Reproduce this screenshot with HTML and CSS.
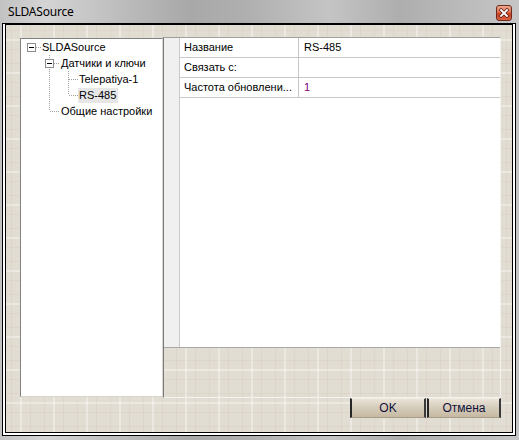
FILE: index.html
```html
<!DOCTYPE html>
<html>
<head>
  <title>SLDASource</title>
  <link rel="stylesheet" href="styles.css">
</head>
<body>
  <div class="window">
    <div class="titlebar">
      <span class="title">SLDASource</span>
      <span class="close">
        <svg width="16" height="16" viewBox="0 0 16 16">
          <path d="M5 5 L11 11 M11 5 L5 11" stroke="#5a1a10" stroke-width="3.2" stroke-linecap="square"/>
          <path d="M5 5 L11 11 M11 5 L5 11" stroke="#fff" stroke-width="1.8" stroke-linecap="square"/>
        </svg>
      </span>
    </div>

    <div class="frame">
      <div class="client">
        <div class="main">
          <div class="tree">
            <div class="row lvl0"><span class="exp"></span><span class="dash"></span><span class="label">SLDASource</span></div>
            <div class="group group-root">
              <div class="row lvl1"><span class="exp"></span><span class="dash"></span><span class="label">Датчики и ключи</span></div>
              <div class="group group-sensors">
                <div class="row lvl2"><span class="dash"></span><span class="label">Telepatiya-1</span></div>
                <div class="row lvl2"><span class="dash"></span><span class="label selected">RS-485</span></div>
              </div>
              <div class="row lvl1-leaf"><span class="dash"></span><span class="label">Общие настройки</span></div>
            </div>
          </div>

          <div class="props">
            <div class="grid">
              <div class="gutter"></div>
              <div class="rows">
                <div class="prow"><div class="pname">Название</div><div class="pval">RS-485</div></div>
                <div class="prow"><div class="pname">Связать с:</div><div class="pval"></div></div>
                <div class="prow"><div class="pname">Частота обновлени...</div><div class="pval num">1</div></div>
              </div>
            </div>
            <div class="help"></div>
          </div>
        </div>

        <div class="buttons">
          <button class="btn btn-ok">OK</button>
          <button class="btn btn-cancel">Отмена</button>
        </div>
      </div>
    </div>
  </div>
</body>
</html>
```

FILE: styles.css
```css
body {
  margin: 0;
  font-family: "Liberation Sans", Arial, sans-serif;
  font-size: 11px;
  color: #000;
}

.window {
  width: 519px;
  height: 440px;
  display: flex;
  flex-direction: column;
  background: linear-gradient(to right, #c2c2c2 0, #d4d4d4 45px, #c0c0c0 110px, #a8a8a8 190px, #b0b0b0 250px, #c4c4c4 330px, #aeaeae 400px, #bababa 460px, #c6c6c6 519px);
}

.titlebar {
  height: 23px;
  display: flex;
  align-items: flex-start;
  justify-content: space-between;
}

.title {
  font-family: "Noto Sans", "Open Sans", sans-serif;
  font-size: 12px;
  margin: 3px 0 0 8px;
  letter-spacing: -0.2px;
}

.close {
  width: 16px;
  height: 16px;
  margin: 5px 7px 0 0;
  box-sizing: border-box;
  border: 1px solid #6b2a1e;
  border-radius: 3px;
  background: linear-gradient(to bottom, #f0a890 0, #e07050 45%, #c8401f 55%, #dc6040 100%);
  display: flex;
}

.close svg {
  margin: -1px;
}

.frame {
  flex: 1;
  margin: 0 3px 4px 2px;
  border: 1px solid #000;
  background: #fff;
  padding: 0 2px 2px 2px;
  display: flex;
}

.client {
  flex: 1;
  border: 1px solid #000;
  padding: 12px 11px 14px 14px;
  display: flex;
  flex-direction: column;
  background-color: #e1ddd2;
  background-image:
    linear-gradient(to right, transparent 14px, rgba(255, 255, 255, 0.35) 14px 16px, transparent 16px),
    linear-gradient(to bottom, transparent 14px, rgba(255, 255, 255, 0.35) 14px 16px, transparent 16px),
    linear-gradient(to right, transparent 5px, rgba(200, 160, 150, 0.12) 5px 6px, transparent 6px 24px, rgba(200, 160, 150, 0.12) 24px 25px, transparent 25px),
    linear-gradient(to bottom, transparent 5px, rgba(200, 160, 150, 0.12) 5px 6px, transparent 6px 24px, rgba(200, 160, 150, 0.12) 24px 25px, transparent 25px);
  background-size: 33px 33px;
}

.main {
  height: 361px;
  display: flex;
}

/* tree */
.tree {
  width: 143px;
  height: 359px;
  margin-top: 1px;
  box-sizing: border-box;
  background: #fff;
  border: 1px solid;
  border-color: #828282 #d8d4cc #d8d4cc #828282;
}

.row {
  height: 16px;
  display: flex;
  align-items: center;
  white-space: nowrap;
}

.lvl0 { padding-left: 6px; }
.lvl1 { padding-left: 24px; }
.lvl2 { padding-left: 48px; }
.lvl1-leaf { padding-left: 29px; }

.exp {
  width: 9px;
  height: 9px;
  box-sizing: border-box;
  border: 1px solid #8c8c8c;
  background: linear-gradient(#000, #000) center / 5px 1px no-repeat, #fff;
}

.dash {
  height: 1px;
  background: repeating-linear-gradient(to right, #a0a0a0 0 1px, transparent 1px 2px);
}

.lvl0 .dash { width: 5px; }
.lvl1 .dash { width: 6px; }
.lvl2 .dash { width: 9px; }
.lvl1-leaf .dash { width: 10px; }

.label {
  padding: 1px 2px 1px 1px;
  line-height: 13px;
}

.label.selected {
  background: #e6e6e6;
}

.group {
  background-image: repeating-linear-gradient(to bottom, #a0a0a0 0 1px, transparent 1px 2px);
  background-repeat: no-repeat;
  background-size: 1px calc(100% - 8px);
}

.group-root { background-position: 28px 0; }
.group-sensors { background-position: 47px -2px; background-size: 1px calc(100% - 6px); }

/* property grid */
.props {
  flex: 1;
  display: flex;
  flex-direction: column;
  border: 1px solid;
  border-color: #a0a0a0 #f4f2ee #f4f2ee #7a7a7a;
}

.grid {
  flex: 1;
  display: flex;
  background: #fff;
}

.gutter {
  width: 15px;
  background: #f0f0f0;
  border-right: 1px solid #c8c8c8;
}

.rows {
  flex: 1;
}

.prow {
  height: 19px;
  display: flex;
  border-bottom: 1px solid #c8c8c8;
}

.pname {
  width: 114px;
  padding-left: 4px;
  border-right: 1px solid #c8c8c8;
  line-height: 19px;
  white-space: nowrap;
  overflow: hidden;
}

.pval {
  flex: 1;
  padding-left: 5px;
  line-height: 19px;
}

.pval.num {
  color: #800080;
}

.help {
  height: 49px;
  border-top: 1px solid #a8a8a8;
}

/* buttons */
.buttons {
  height: 20px;
  display: flex;
  justify-content: flex-end;
  gap: 1px;
}

.btn {
  height: 20px;
  padding: 0;
  font-family: "Liberation Sans", Arial, sans-serif;
  font-size: 12px;
  color: #10103a;
  border: none;
  border-left: 2px solid #262626;
  border-right: 2px solid #3a3a3a;
  border-top: 1px solid #f0ece4;
  border-bottom: 1px solid #a89c86;
  background: linear-gradient(to bottom, #eae4d8 0, #d8cfbf 40%, #c6b9a3 100%);
}

.btn-ok { width: 76px; }
.btn-cancel { width: 74px; }
```
